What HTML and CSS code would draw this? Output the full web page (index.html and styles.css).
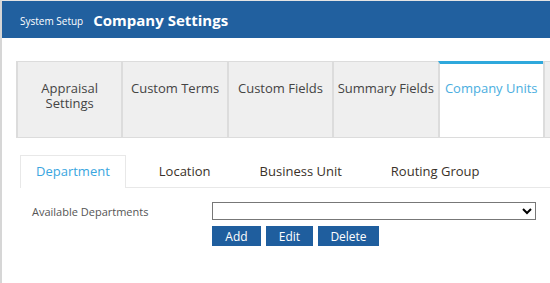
FILE: index.html
```html
<!DOCTYPE html>
<html lang="en">
<head>
    <meta charset="UTF-8">
    <title>Company Settings</title>
    <link rel="stylesheet" href="styles.css">
</head>
<body>
    <header class="header">
        <span class="crumb">System Setup</span>
        <h1>Company Settings</h1>
    </header>

    <div class="content">
        <div class="tabs">
            <div class="tab">Appraisal<br>Settings</div>
            <div class="tab">Custom Terms</div>
            <div class="tab">Custom Fields</div>
            <div class="tab">Summary Fields</div>
            <div class="tab active">Company Units</div>
            <div class="tab"></div>
        </div>

        <div class="subtabs">
            <div class="subtab active">Department</div>
            <div class="subtab">Location</div>
            <div class="subtab">Business Unit</div>
            <div class="subtab">Routing Group</div>
        </div>

        <div class="form-row">
            <label for="departments">Available Departments</label>
            <div class="field">
                <select id="departments"><option></option></select>
                <div class="actions">
                    <button class="button btn-add">Add</button>
                    <button class="button btn-edit">Edit</button>
                    <button class="button btn-delete">Delete</button>
                </div>
            </div>
        </div>
    </div>
</body>
</html>
```

FILE: styles.css
```css
html, body {
    height: 100%;
}

body {
    font-family: 'Open Sans', sans-serif;
    margin: 0;
    box-sizing: border-box;
    background-color: white;
    border-top: 1px solid #e4e4e4;
    border-left: 2px solid #d6d6d6;
    overflow: hidden;
}

.header {
    background-color: #21609f;
    color: white;
    height: 37px;
    display: flex;
    align-items: center;
    padding-left: 18px;
}

.crumb {
    font-size: 10px;
    margin-right: 10px;
    margin-top: 2px;
}

.header h1 {
    margin: 0;
    font-size: 15px;
    font-weight: bold;
}

.content {
    padding: 23px 0 0 14px;
    overflow: hidden;
}

.tabs {
    display: flex;
    width: 600px;
}

.tab {
    width: 105.4px;
    flex: none;
    box-sizing: border-box;
    height: 77px;
    padding-top: 19px;
    background-color: #efefef;
    border: 1px solid #dcdcdc;
    border-right-width: 0;
    border-left-width: 2px;
    text-align: center;
    font-size: 13px;
    line-height: 15px;
    color: #444;
}

.tab.active {
    background-color: white;
    border-top: 3px solid #2fa8dc;
    padding-top: 17px;
    color: #4aaee0;
}

.subtabs {
    display: flex;
    margin: 17px 0 0 4px;
    border-bottom: 1px solid #e8e8e8;
    height: 32px;
}

.subtab {
    box-sizing: border-box;
    height: 33px;
    padding: 0 15px;
    margin-right: 17px;
    line-height: 31px;
    font-size: 13px;
    color: #3a3129;
    border: 1px solid transparent;
    border-bottom: none;
}

.subtab.active {
    color: #3aa6e0;
    background-color: white;
    border-color: #e8e8e8;
}

.form-row {
    display: flex;
    padding: 14px 0 0 16px;
}

.form-row label {
    width: 180px;
    font-size: 11px;
    color: #555;
    padding-top: 2px;
}

.field select {
    display: block;
    width: 324px;
    height: 18px;
    border: 1px solid #777;
    border-radius: 0;
    background-color: white;
    font-size: 11px;
}

.actions {
    display: flex;
    margin-top: 6px;
}

.button {
    background-color: #1f5e9e;
    color: white;
    border: none;
    height: 20px;
    padding: 0;
    margin-right: 5px;
    font-family: 'Open Sans', sans-serif;
    font-size: 12px;
    cursor: pointer;
}

.btn-add {
    width: 49px;
}

.btn-edit {
    width: 47px;
}

.btn-delete {
    width: 61px;
}
```
